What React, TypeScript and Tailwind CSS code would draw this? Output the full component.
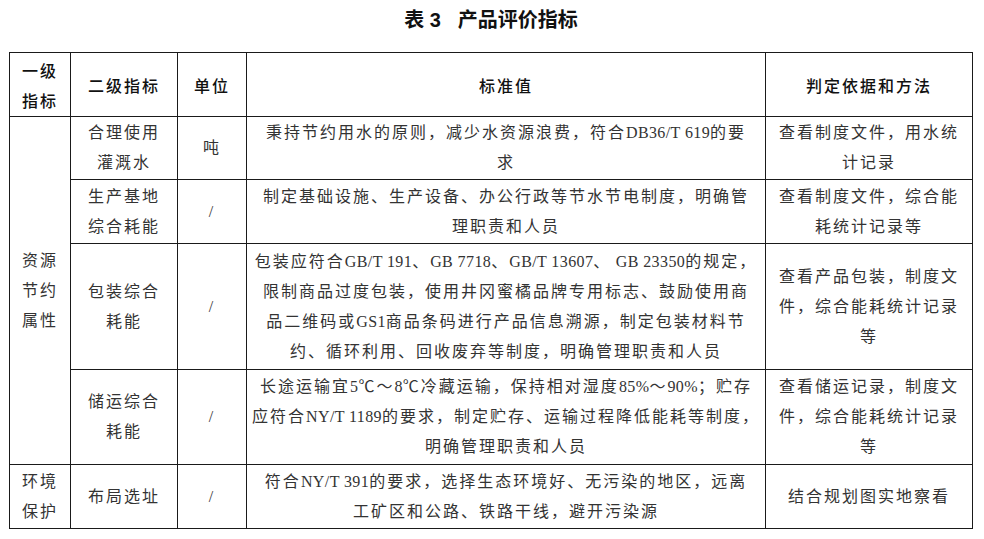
import React from 'react';

type Row = {
  level1?: { lines: string[]; span: number };
  level2: string[];
  unit: string;
  standard: string[];
  method: string[];
  height: number;
};

const rows: Row[] = [
  {
    level1: { lines: ['资源', '节约', '属性'], span: 4 },
    level2: ['合理使用', '灌溉水'],
    unit: '吨',
    standard: ['秉持节约用水的原则，减少水资源浪费，符合DB36/T 619的要', '求'],
    method: ['查看制度文件，用水统', '计记录'],
    height: 63,
  },
  {
    level2: ['生产基地', '综合耗能'],
    unit: '/',
    standard: ['制定基础设施、生产设备、办公行政等节水节电制度，明确管', '理职责和人员'],
    method: ['查看制度文件，综合能', '耗统计记录等'],
    height: 64,
  },
  {
    level2: ['包装综合', '耗能'],
    unit: '/',
    standard: [
      '包装应符合GB/T 191、GB 7718、GB/T 13607、 GB 23350的规定，',
      '限制商品过度包装，使用井冈蜜橘品牌专用标志、鼓励使用商',
      '品二维码或GS1商品条码进行产品信息溯源，制定包装材料节',
      '约、循环利用、回收废弃等制度，明确管理职责和人员',
    ],
    method: ['查看产品包装，制度文', '件，综合能耗统计记录', '等'],
    height: 126,
  },
  {
    level2: ['储运综合', '耗能'],
    unit: '/',
    standard: [
      '长途运输宜5℃～8℃冷藏运输，保持相对湿度85%～90%；贮存',
      '应符合NY/T 1189的要求，制定贮存、运输过程降低能耗等制度，',
      '明确管理职责和人员',
    ],
    method: ['查看储运记录，制度文', '件，综合能耗统计记录', '等'],
    height: 95,
  },
  {
    level1: { lines: ['环境', '保护'], span: 1 },
    level2: ['布局选址'],
    unit: '/',
    standard: ['符合NY/T 391的要求，选择生态环境好、无污染的地区，远离', '工矿区和公路、铁路干线，避开污染源'],
    method: ['结合规划图实地察看'],
    height: 64,
  },
];

// latin runs use a serif face with tight spacing, CJK keeps the wide tracking
const Text = ({ text }: { text: string }) => {
  const parts = text.split(/([\x20-\x7E]+)/).filter(Boolean);
  return (
    <>
      {parts.map((p, i) =>
        /^[\x20-\x7E]+$/.test(p) ? (
          <span key={i} className="tracking-[0.4px] whitespace-pre">
            {p}
          </span>
        ) : (
          <span key={i}>{p}</span>
        )
      )}
    </>
  );
};

const Lines = ({ lines }: { lines: string[] }) => (
  <>
    {lines.map((l, i) => (
      <div key={i} className="whitespace-nowrap">
        <Text text={l} />
      </div>
    ))}
  </>
);

const cell = 'border border-[#1a1a1a] text-center align-middle p-0';

export default function App() {
  return (
    <div
      className="w-[984px] h-[539px] bg-white text-[#333] overflow-hidden"
      style={{ fontFamily: '"Liberation Serif", "Noto Sans CJK SC", serif' }}
    >
      <div className="pt-[9px] h-[52px] flex justify-center">
        <h1
          className="text-[20px] leading-[22px] font-bold text-[#111] ml-[-2px]"
          style={{ fontFamily: '"Liberation Sans", "Noto Sans CJK SC", sans-serif' }}
        >
          表 3<span className="ml-[17px]">产品评价指标</span>
        </h1>
      </div>

      <table className="ml-[9px] border-collapse table-fixed w-[963px] text-[16px] leading-[30px] tracking-[2px]">
        <colgroup>
          <col className="w-[61px]" />
          <col className="w-[107px]" />
          <col className="w-[69px]" />
          <col className="w-[519px]" />
          <col className="w-[207px]" />
        </colgroup>
        <thead>
          <tr className="h-[64px] text-[#111]" style={{ fontFamily: '"Noto Sans CJK SC", sans-serif' }}>
            <th className={cell + ' font-medium'}>
              <Lines lines={['一级', '指标']} />
            </th>
            <th className={cell + ' font-medium'}>二级指标</th>
            <th className={cell + ' font-medium'}>单位</th>
            <th className={cell + ' font-medium'}>标准值</th>
            <th className={cell + ' font-medium'}>判定依据和方法</th>
          </tr>
        </thead>
        <tbody>
          {rows.map((r, i) => (
            <tr key={i} style={{ height: r.height }}>
              {r.level1 && (
                <td className={cell} rowSpan={r.level1.span}>
                  <Lines lines={r.level1.lines} />
                </td>
              )}
              <td className={cell}>
                <Lines lines={r.level2} />
              </td>
              <td className={cell}>{r.unit}</td>
              <td className={cell}>
                <Lines lines={r.standard} />
              </td>
              <td className={cell}>
                <Lines lines={r.method} />
              </td>
            </tr>
          ))}
        </tbody>
      </table>
    </div>
  );
}
